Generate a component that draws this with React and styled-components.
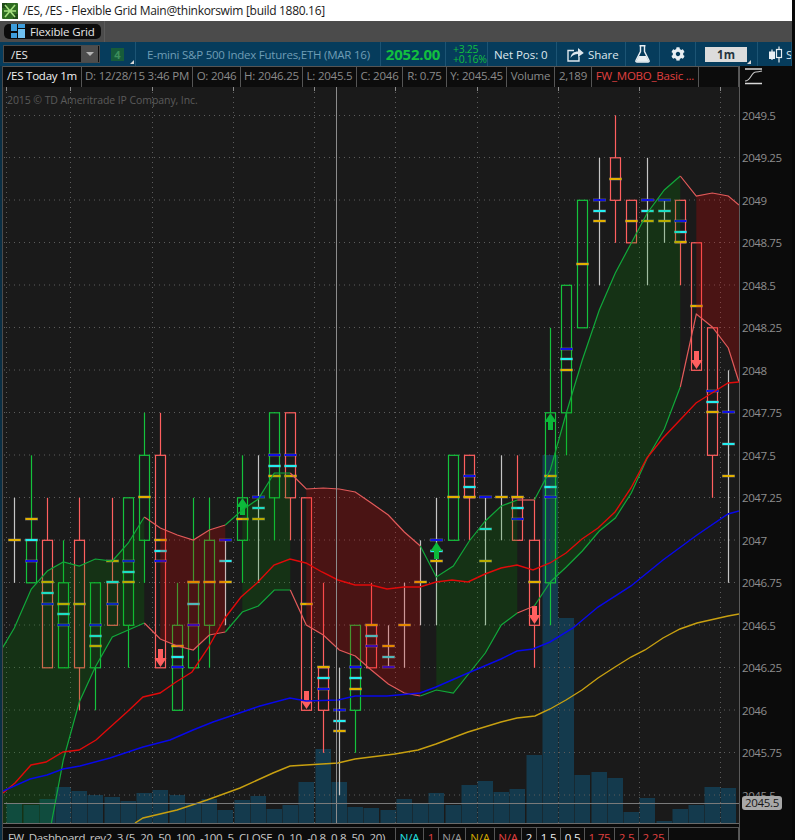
import React from 'react';
import styled, { createGlobalStyle } from 'styled-components';
import { FaCog } from 'react-icons/fa';

const GlobalStyle = createGlobalStyle`
  html, body {
    margin: 0;
    padding: 0;
    background: #0a0a0a;
    font-family: "Open Sans", "Noto Sans", sans-serif;
  }
`;

const Page = styled.div`
  width: 795px;
  height: 840px;
  overflow: hidden;
  display: flex;
`;

const Main = styled.div`
  width: 792px;
  display: flex;
  flex-direction: column;
  flex: none;
`;

const EdgeStrip = styled.div`
  width: 3px;
  background: #080808;
`;

const TitleBar = styled.div`
  height: 21px;
  background: #fff;
  display: flex;
  align-items: center;
  gap: 5px;
  padding-left: 2px;
  font-size: 12px;
  letter-spacing: -0.3px;
  color: #1a1a1a;
  white-space: nowrap;
`;

const TabRow = styled.div`
  height: 21px;
  background: #4b4b4b;
  display: flex;
  align-items: center;
  padding-left: 4px;
`;

const Tab = styled.div`
  width: 97px;
  height: 15px;
  border-radius: 5px;
  background: #0c0c0c;
  display: flex;
  align-items: center;
  gap: 5px;
  padding-left: 7px;
  box-sizing: border-box;
  color: #e6e6e6;
  font-size: 11.5px;
  letter-spacing: -0.15px;
  white-space: nowrap;
`;

const TabDivider = styled.div`
  width: 1px;
  height: 21px;
  margin-left: 3px;
  background: #5a5a5a;
`;

const Toolbar = styled.div`
  height: 24px;
  background: #063c5c;
  display: flex;
  overflow: hidden;
`;

const ToolSection = styled.div`
  position: relative;
  flex: none;
  box-sizing: border-box;
  width: ${p => p.$w}px;
  padding-left: ${p => p.$pad || 0}px;
  display: flex;
  align-items: center;
  justify-content: ${p => (p.$center ? 'center' : 'flex-start')};
  gap: ${p => p.$gap || 0}px;
  border-right: 1px solid #1c5474;
  white-space: nowrap;
  overflow: hidden;
  svg {
    flex: none;
  }
`;

const SymbolSelect = styled.div`
  width: 97px;
  height: 18px;
  box-sizing: border-box;
  border: 1px solid #4a4a4a;
  background: #0e0e0e;
  display: flex;
  align-items: center;
  justify-content: space-between;
  padding-left: 7px;
  color: #e8e8e8;
  font-size: 11.5px;
`;

const SelectButton = styled.div`
  width: 17px;
  height: 16px;
  background: #4d4d4d;
  display: flex;
  align-items: center;
  justify-content: center;
  margin-right: 1px;
  &::after {
    content: "";
    border-left: 4px solid transparent;
    border-right: 4px solid transparent;
    border-top: 4px solid #b5b5b5;
  }
`;

const LinkBadge = styled.div`
  width: 13px;
  height: 13px;
  margin-left: 11px;
  background: #175c3a;
  color: #3d8f5c;
  font-size: 11px;
  font-weight: 700;
  display: flex;
  align-items: center;
  justify-content: center;
`;

const CornerMark = styled.div`
  position: absolute;
  right: ${p => p.$right}px;
  bottom: 2px;
  width: 0;
  height: 0;
  border-left: 4px solid transparent;
  border-bottom: 4px solid #d8d8d8;
`;

const Description = styled.span`
  color: #6f9db5;
  font-size: 11.5px;
  letter-spacing: -0.23px;
`;

const LastPrice = styled.span`
  color: #12bf3f;
  font-size: 15px;
  font-weight: 700;
  letter-spacing: -0.2px;
`;

const Change = styled.div`
  color: #12bf3f;
  font-size: 10.5px;
  line-height: 10.5px;
  letter-spacing: -0.3px;
`;

const ToolText = styled.span`
  color: ${p => p.$color || '#dfe8ee'};
  font-size: 11.5px;
  letter-spacing: -0.05px;
`;

const TimeChip = styled.div`
  width: 42px;
  height: 15px;
  background: #dcdcdc;
  color: #26343c;
  font-size: 11.5px;
  font-weight: 700;
  display: flex;
  align-items: center;
  justify-content: center;
`;

const Workspace = styled.div`
  height: 774px;
  display: flex;
`;

const Gutter = styled.div`
  width: 3px;
  box-sizing: border-box;
  background: #0a2f45;
  border-right: 1px solid #4a4a4a;
`;

const ChartColumn = styled.div`
  width: 736px;
  display: flex;
  flex-direction: column;
  background: #0a0a0a;
`;

const CellRow = styled.div`
  height: ${p => p.$h}px;
  margin-top: ${p => p.$top || 0}px;
  display: flex;
  box-sizing: border-box;
  border-top: 1px solid #555;
  background: #0c0c0c;
  overflow: hidden;
`;

const Cell = styled.div`
  flex: none;
  width: ${p => p.$w}px;
  box-sizing: border-box;
  border-right: 1px solid #555;
  padding-top: ${p => p.$top || 0}px;
  padding-left: ${p => p.$left || 0}px;
  text-align: ${p => (p.$left ? 'left' : 'center')};
  font-size: 11.5px;
  letter-spacing: ${p => p.$track ?? -0.22}px;
  line-height: 18px;
  white-space: nowrap;
  overflow: hidden;
  color: ${p => p.$color || '#8a8a8a'};
`;

const ChartArea = styled.div`
  position: relative;
  height: 737px;
  flex: none;
  background: #1a1a1a;
  border-bottom: 1px solid #6a6a6a;
  box-sizing: border-box;
`;

const ChartSvg = styled.svg`
  display: block;
  width: 736px;
  height: 736px;
`;

const Copyright = styled.div`
  position: absolute;
  left: 4px;
  top: 6px;
  color: #5a5a5a;
  font-size: 10.5px;
  letter-spacing: -0.08px;
  white-space: nowrap;
`;

const Axis = styled.div`
  position: relative;
  width: 53px;
  box-sizing: border-box;
  border-left: 1px solid #5a5a5a;
  background: #0b0b0b;
  display: flex;
  flex-direction: column;
`;

const AxisIcon = styled.div`
  height: 28px;
  padding: 2px 0 0 5px;
  box-sizing: border-box;
`;

const AxisLabel = styled.div`
  height: 42.5px;
  flex: none;
  display: flex;
  align-items: center;
  padding-left: 2px;
  color: #8d8d8d;
  font-size: 11.5px;
  letter-spacing: -0.4px;
`;

const PriceChip = styled.div`
  position: absolute;
  left: 2px;
  top: 730px;
  width: 40px;
  height: 14px;
  border-radius: 3px;
  background: #a8a8a8;
  color: #161616;
  font-size: 11.5px;
  letter-spacing: -0.3px;
  line-height: 14px;
  text-align: center;
`;

// prices are written without the leading 20 (47.25 = 2047.25)
const py = n => 115.3 + (49.5 - n) * 170;
const barX = i => Math.round(14.3 + i * 16.23);

const COLORS = { g: '#14c23c', r: '#ff5f5f', w: '#c6c6c6' };
const n = null;

// colour, high, low, box top, box bottom, yellow, cyan, blue (pixel rows)
const CANDLES = [
  ['w', 47.25, 46.75, n, n, 540],
  ['g', 47.5, 46.75, 47, 46.75, 519, 540, 561],
  ['r', 47.25, 46.25, 47, 46.25, 582, 593, 604],
  ['g', 47, 46.25, 46.75, 46.25, 604, 614, 625],
  ['r', 47.25, 46, 47, 46.25, 604],
  ['g', 46.75, 46, 46.75, 46.25, 646, 636, 625],
  ['r', 47.25, 46.5, 46.75, 46.5, 561, 582, 604],
  ['g', 47.25, 46.25, 47.25, 46.5, 582, 572, 561],
  ['g', 47.75, 46.75, 47.5, 47, 497],
  ['r', 47.75, 46.25, 47.5, 46.25, 540, 551, 561],
  ['g', 46.75, 46, 46.5, 46, 646, 657, 667],
  ['g', 47.25, 46.25, 46.75, 46.25, 582, 604, 625],
  ['g', 47.25, 46.25, 47, 46.5, 582],
  ['w', 47, 46.5, n, n, 582, 561, 540],
  ['g', 47.5, 46.75, 47.25, 47, 519],
  ['w', 47.5, 46.75, n, n, 519, 508, 497],
  ['g', 47.75, 47, 47.75, 47.25, 476, 466, 455],
  ['r', 47.75, 47, 47.75, 47.25, 476, 466, 455],
  ['r', 47.25, 46, 47.25, 46, 604],
  ['r', 46.75, 45.75, 46.25, 46, 667, 678, 689],
  ['w', 46.25, 45.5, n, n, 731, 721, 710],
  ['g', 46.5, 45.75, 46.5, 46, 689, 678, 667],
  ['r', 46.75, 46.25, 46.5, 46.25, 625, 636, 646],
  ['w', 46.5, 46.25, n, n, 646, 657, 667],
  ['w', 46.75, 46.25, n, n, 625],
  ['w', 47, 46.5, n, n, 582],
  ['w', 47.25, 46.5, n, n, 561, 551, 540],
  ['g', 47.5, 47, 47.5, 47, 497],
  ['r', 47.5, 47, 47.5, 47.25, 497, 487, 476],
  ['w', 47.25, 46.5, n, n, 561, 529, 497],
  ['w', 47.5, 47, n, n, 497],
  ['r', 47.5, 47, 47.25, 47, 497, 508, 519],
  ['r', 47.25, 46.25, 47, 46.5, 582],
  ['g', 48.25, 46.5, 47.75, 46.75, 476, 487, 497],
  ['g', 48.5, 47.5, 48.5, 47.75, 370, 359, 349],
  ['g', 49, 48.25, 49, 48.25, 264],
  ['w', 49.25, 48.5, n, n, 221, 211, 200],
  ['r', 49.5, 48.75, 49.25, 49, 179],
  ['r', 49, 48.75, 49, 48.75, 221],
  ['w', 49.25, 48.5, n, n, 221, 211, 200],
  ['w', 49, 48.75, n, n, 221, 211, 200],
  ['r', 49, 48.5, 49, 48.75, 242, 232, 221],
  ['r', 48.75, 48, 48.75, 48, 306],
  ['r', 48.25, 47.25, 48.25, 47.5, 412, 402, 391],
  ['w', 48, 46.75, n, n, 476, 444, 412],
];

const VOLUME = [
  803, 805, 799, 787, 791, 795, 797, 801, 793, 790, 795, 803, 799, 810, 800, 796,
  809, 805, 782, 749, 782, 807, 808, 810, 799, 803, 793, 805, 785, 781, 792, 789,
  755, 455, 618, 775, 772, 778, 812, 798, 821, 809, 805, 787, 788,
];

const UPPER = [
  628, 589, 571, 562, 566, 559, 561, 543, 517, 528, 535, 540, 530, 525, 510, 499,
  473, 473, 489, 488, 489, 492, 503, 515, 532, 546, 577, 566, 541, 521, 506, 500,
  500, 470, 413, 360, 310, 273, 243, 213, 190, 176, 196, 193, 196,
];

const LOWER = [
  960, 900, 845, 760, 702, 667, 637, 630, 623, 639, 646, 650, 635, 632, 612, 606,
  590, 590, 625, 635, 650, 656, 670, 684, 693, 696, 690, 693, 673, 653, 625, 613,
  606, 582, 567, 551, 531, 518, 493, 458, 429, 387, 314, 327, 348,
];

// band colour runs, by bar index; the last run carries on to the axis
const RUNS = [
  ['g', -1, 8], ['r', 8, 13], ['g', 13, 17], ['r', 17, 25], ['g', 25, 31],
  ['r', 31, 32], ['g', 32, 41], ['r', 41, 45],
];

// fills leave one bar open after each colour change
const CLOUDS = [
  ['g', -1, 8], ['r', 9, 13], ['g', 14, 17], ['r', 18, 25], ['g', 26, 31],
  ['g', 33, 41], ['r', 42, 45],
];

const bandPoint = (band, i) => {
  if (i === -1) return [0, band === UPPER ? 652 : 1000];
  if (i === 45) return [739, band === UPPER ? 205 : 382];
  return [barX(i) + 0.3, band[i]];
};

const range = (a, b) => Array.from({ length: b - a + 1 }, (_, k) => a + k);
const toPoints = list => list.map(p => p.join(',')).join(' ');

const RED_LINE = [
  [3, 793], [15, 783], [31, 765], [46, 762], [63, 752], [79, 750], [96, 740], [107, 730],
  [127, 712], [143, 697], [160, 693], [176, 682], [192, 672], [208, 648], [225, 618],
  [241, 597], [257, 583], [274, 565], [290, 559], [306, 563], [322, 572], [338, 580],
  [355, 585], [371, 585], [387, 589], [404, 587], [420, 587], [436, 582], [452, 580],
  [468, 582], [485, 574], [501, 568], [517, 565], [533, 570], [550, 563], [566, 553],
  [582, 539], [598, 528], [615, 512], [631, 488], [647, 458], [663, 438], [680, 420],
  [696, 403], [712, 393], [728, 383], [739, 382],
];

const BLUE_LINE = [
  [3, 791], [30, 779], [47, 775], [63, 769], [80, 766], [110, 758], [143, 747], [170, 740],
  [193, 730], [213, 722], [260, 706], [290, 698], [306, 701], [338, 700], [355, 696],
  [387, 696], [420, 693], [436, 687], [468, 673], [501, 659], [517, 651], [533, 649],
  [550, 642], [573, 628], [598, 607], [631, 586], [663, 560], [697, 535], [728, 514],
  [739, 511],
];

const GOLD_LINE = [
  [135, 823], [143, 818], [177, 810], [207, 800], [240, 788], [273, 773], [290, 766],
  [338, 763], [355, 759], [395, 754], [418, 750], [436, 744], [468, 732], [501, 722],
  [517, 718], [535, 716], [550, 709], [566, 700], [582, 690], [598, 678], [615, 667],
  [631, 657], [645, 650], [663, 638], [680, 629], [697, 623], [728, 616], [739, 614],
];

const GRID_X = [6, 70, 152, 233, 314, 395, 477, 558, 639, 720];
const GRID_Y = [115.5, 157.5, 200, 242.5, 285, 327.5, 370, 412.5, 455, 497.5, 540, 582.5, 625, 667.5, 710, 752.5, 795];

const DOWN_ARROWS = [[9, 667], [18, 709], [32, 624], [42, 369]];
const UP_ARROWS = [[14, 498], [26, 542], [33, 413]];

const Dash = ({ x, y, color }) => (
  <g>
    <rect x={x - 6.5} y={y - 1.5} width="13" height="3" fill="#a0a0a0" opacity="0.45" />
    <rect x={x - 6} y={y - 1} width="12" height="2" fill={color} />
  </g>
);

const Candle = ({ data, index }) => {
  const [c, hi, lo, top, bot, yellow, cyan, blue] = data;
  const x = barX(index) + 0.5;
  const color = COLORS[c];
  return (
    <g>
      {top === n ? (
        <line x1={x} x2={x} y1={py(hi)} y2={py(lo)} stroke={color} strokeWidth="1.2" />
      ) : (
        <>
          {hi > top && <line x1={x} x2={x} y1={py(hi)} y2={py(top)} stroke={color} strokeWidth="1.2" />}
          {lo < bot && <line x1={x} x2={x} y1={py(bot)} y2={py(lo)} stroke={color} strokeWidth="1.2" />}
          <rect x={x - 5} y={py(top)} width="10" height={py(bot) - py(top)} fill="none" stroke={color} strokeWidth="1.2" />
        </>
      )}
      {blue && <Dash x={x} y={blue} color="#1212e6" />}
      {cyan && <Dash x={x} y={cyan} color="#24eef0" />}
      {yellow && <Dash x={x} y={yellow} color="#e2b000" />}
    </g>
  );
};

const Chart = () => (
  <ChartSvg viewBox="3 87 736 736">
    {VOLUME.map((top, i) => (
      <rect key={i} x={barX(i) - 7.5} y={top} width="15.5" height={823 - top} fill="#143a4d" />
    ))}
    {GRID_Y.map(y => (
      <line key={y} x1="4" x2="739" y1={y} y2={y} stroke="#5c5c5c" strokeDasharray="1 4" />
    ))}
    {GRID_X.map(x => (
      <g key={x}>
        <line x1={x + 0.5} x2={x + 0.5} y1="87" y2="823" stroke="#5c5c5c" strokeDasharray="1 4" />
        <line x1={x + 0.5} x2={x + 0.5} y1="87" y2="91" stroke="#8a8a8a" />
      </g>
    ))}
    {CANDLES.map((data, i) => <Candle key={i} data={data} index={i} />)}
    {CLOUDS.map(([c, a, b], k) => {
      const idx = range(a, b);
      const pts = [...idx.map(i => bandPoint(UPPER, i)), ...idx.reverse().map(i => bandPoint(LOWER, i))];
      return (
        <polygon key={k} points={toPoints(pts)} fill={c === 'g' ? 'rgb(0,152,0)' : 'rgb(235,0,0)'} fillOpacity={c === 'g' ? 0.19 : 0.23} />
      );
    })}
    {DOWN_ARROWS.map(([i, tip]) => {
      const x = barX(i) + 0.5;
      return (
        <polygon key={i} fill="#ff5f5f" points={toPoints([[x, tip], [x - 6, tip - 9], [x - 2.5, tip - 9], [x - 2.5, tip - 18], [x + 2.5, tip - 18], [x + 2.5, tip - 9], [x + 6, tip - 9]])} />
      );
    })}
    {UP_ARROWS.map(([i, tip]) => {
      const x = barX(i) + 0.5;
      return (
        <polygon key={i} fill="#0cb83a" points={toPoints([[x, tip], [x - 6, tip + 9], [x - 2.5, tip + 9], [x - 2.5, tip + 17], [x + 2.5, tip + 17], [x + 2.5, tip + 9], [x + 6, tip + 9]])} />
      );
    })}
    {[UPPER, LOWER].map((band, b) =>
      RUNS.map(([c, from, to], k) => (
        <polyline
          key={`${b}-${k}`}
          points={toPoints(range(from, to).map(i => bandPoint(band, i)))}
          fill="none"
          stroke={c === 'g' ? '#11a83a' : '#e25a5a'}
          strokeWidth="1.2"
        />
      ))
    )}
    <polyline points={toPoints(RED_LINE)} fill="none" stroke="#e00a0a" strokeWidth="1.4" />
    <polyline points={toPoints(BLUE_LINE)} fill="none" stroke="#0808ea" strokeWidth="1.5" />
    <polyline points={toPoints(GOLD_LINE)} fill="none" stroke="#c8a010" strokeWidth="1.4" />
    <line x1="336.5" x2="336.5" y1="87" y2="823" stroke="#8c8c8c" />
    <line x1="4" x2="739" y1="803.5" y2="803.5" stroke="#7a7a7a" />
  </ChartSvg>
);

const AppIcon = () => (
  <svg width="16" height="16" viewBox="0 0 16 16">
    <rect width="16" height="16" rx="1" fill="#2f6b22" />
    <rect x="0" y="0" width="5" height="5" fill="#1f4a18" />
    <rect x="11" y="11" width="5" height="5" fill="#1f4a18" />
    <path d="M3 2 L8 8 L13 2 M8 8 L3 14 M8 8 L13 14 M2 8 L14 8" stroke="#a6e080" strokeWidth="1.6" fill="none" />
  </svg>
);

const GridIcon = () => (
  <svg width="14" height="15" viewBox="0 0 14 15">
    <rect x="0" y="0" width="6" height="7" fill="#3e9edc" />
    <rect x="0" y="9" width="6" height="5" fill="#3e9edc" />
    <rect x="7" y="0" width="7" height="4" fill="#3e9edc" />
    <rect x="7" y="5" width="7" height="9" fill="#6fc0f0" />
  </svg>
);

const ShareIcon = () => (
  <svg width="17" height="15" viewBox="0 0 17 15">
    <path d="M7 3.5 H1 V14 H12 V9.5" fill="none" stroke="#dfe8ee" strokeWidth="1.4" />
    <path d="M3.5 11 C4 6.5 7 4.5 11 4.5 V1 L16.8 6 L11 10 V7 C8 7 5.5 8 3.5 11 Z" fill="#dfe8ee" />
  </svg>
);

const FlaskIcon = () => (
  <svg width="15" height="18" viewBox="0 0 15 18">
    <path d="M4.5 0.8 H10.5 M5.5 1 V6.5 L1 15.5 Q0.5 17 2 17 H13 Q14.5 17 14 15.5 L9.5 6.5 V1" fill="none" stroke="#e8eef2" strokeWidth="1.4" />
    <path d="M3.8 11 H11.2 L14 16.8 H1 Z" fill="#e8eef2" />
  </svg>
);

const CandlesIcon = () => (
  <svg width="15" height="17" viewBox="0 0 15 17">
    <path d="M4 3.5 V14 M11 0.5 V16.5" stroke="#e8eef2" strokeWidth="1.2" />
    <rect x="1" y="5.5" width="6" height="7.5" fill="#e8eef2" />
    <rect x="8.5" y="3.5" width="5" height="8" fill="#063c5c" stroke="#e8eef2" strokeWidth="1.2" />
  </svg>
);

const CurveIcon = () => (
  <svg width="18" height="17" viewBox="0 0 18 17">
    <path d="M0 1 H17 M0 15.5 H17" stroke="#d8d8d8" strokeWidth="1.6" />
    <path d="M0 13 C6 13 6 4 11 4 C13 4 15 3.5 17 3" fill="none" stroke="#c8c8c8" strokeWidth="1.1" />
  </svg>
);

const LEGEND = [
  { w: 79, text: '/ES Today 1m', color: '#f2f2f2' },
  { w: 111, text: 'D: 12/28/15 3:46 PM' },
  { w: 48, text: 'O: 2046' },
  { w: 62, text: 'H: 2046.25' },
  { w: 54, text: 'L: 2045.5' },
  { w: 46, text: 'C: 2046' },
  { w: 44, text: 'R: 0.75' },
  { w: 60, text: 'Y: 2045.45' },
  { w: 48, text: 'Volume' },
  { w: 37, text: '2,189' },
  { w: 107, text: 'FW_MOBO_Basic ...', color: '#e04040' },
  { w: 40, text: '' },
];

const STUDIES = [
  { w: 393, left: 5, track: -0.32, text: 'FW_Dashboard_rev2_3 (5, 20, 50, 100, -100, 5, CLOSE, 0, 10, -0.8, 0.8, 50, 20)', color: '#c8c8c8' },
  { w: 28, text: 'N/A', color: '#22e0e0' },
  { w: 15, text: '1', color: '#e04040' },
  { w: 27, text: 'N/A', color: '#9a9a9a' },
  { w: 29, text: 'N/A', color: '#d0a800' },
  { w: 27, text: 'N/A', color: '#e04040' },
  { w: 15, text: '2', color: '#f0f0f0' },
  { w: 24, text: '1.5', color: '#f0f0f0' },
  { w: 24, text: '0.5', color: '#f0f0f0' },
  { w: 30, text: '1.75', color: '#e04040' },
  { w: 24, text: '2.5', color: '#e04040' },
  { w: 30, text: '2.25', color: '#e04040' },
  { w: 70, text: '' },
];

const AXIS_LABELS = [
  '2049.5', '2049.25', '2049', '2048.75', '2048.5', '2048.25', '2048', '2047.75', '2047.5',
  '2047.25', '2047', '2046.75', '2046.5', '2046.25', '2046', '2045.75', '2045.5',
];

export default function App() {
  return (
    <Page>
      <GlobalStyle />
      <Main>
        <TitleBar>
          <AppIcon />
          /ES, /ES - Flexible Grid Main@thinkorswim [build 1880.16]
        </TitleBar>
        <TabRow>
          <Tab>
            <GridIcon />
            Flexible Grid
          </Tab>
          <TabDivider />
        </TabRow>
        <Toolbar>
          <ToolSection $w={136} $pad={3}>
            <SymbolSelect>
              /ES
              <SelectButton />
            </SymbolSelect>
            <LinkBadge>4</LinkBadge>
            <CornerMark $right={1} />
          </ToolSection>
          <ToolSection $w={245} $pad={11}>
            <Description>E-mini S&amp;P 500 Index Futures,ETH (MAR 16)</Description>
          </ToolSection>
          <ToolSection $w={65} $center>
            <LastPrice>2052.00</LastPrice>
          </ToolSection>
          <ToolSection $w={42} $pad={7}>
            <Change>
              +3.25
              <br />
              +0.16%
            </Change>
          </ToolSection>
          <ToolSection $w={69} $pad={6}>
            <ToolText>Net Pos: 0</ToolText>
          </ToolSection>
          <ToolSection $w={69} $pad={10} $gap={4}>
            <ShareIcon />
            <ToolText>Share</ToolText>
          </ToolSection>
          <ToolSection $w={34} $center>
            <FlaskIcon />
          </ToolSection>
          <ToolSection $w={36} $center>
            <FaCog size={14} color="#e8eef2" />
          </ToolSection>
          <ToolSection $w={62} $pad={9}>
            <TimeChip>1m</TimeChip>
            <CornerMark $right={6} />
          </ToolSection>
          <ToolSection $w={34} $pad={10} $gap={3}>
            <CandlesIcon />
            <ToolText>Style</ToolText>
          </ToolSection>
        </Toolbar>
        <Workspace>
          <Gutter />
          <ChartColumn>
            <CellRow $h={21}>
              {LEGEND.map((c, i) => (
                <Cell key={i} $w={c.w} $color={c.color}>{c.text}</Cell>
              ))}
            </CellRow>
            <ChartArea>
              <Chart />
              <Copyright>2015 © TD Ameritrade IP Company, Inc.</Copyright>
            </ChartArea>
            <CellRow $h={13} $top={3}>
              {STUDIES.map((c, i) => (
                <Cell key={i} $w={c.w} $color={c.color} $top={1} $left={c.left} $track={c.track}>{c.text}</Cell>
              ))}
            </CellRow>
          </ChartColumn>
          <Axis>
            <AxisIcon>
              <CurveIcon />
            </AxisIcon>
            {AXIS_LABELS.map(label => (
              <AxisLabel key={label}>{label}</AxisLabel>
            ))}
            <PriceChip>2045.5</PriceChip>
          </Axis>
        </Workspace>
      </Main>
      <EdgeStrip />
    </Page>
  );
}
